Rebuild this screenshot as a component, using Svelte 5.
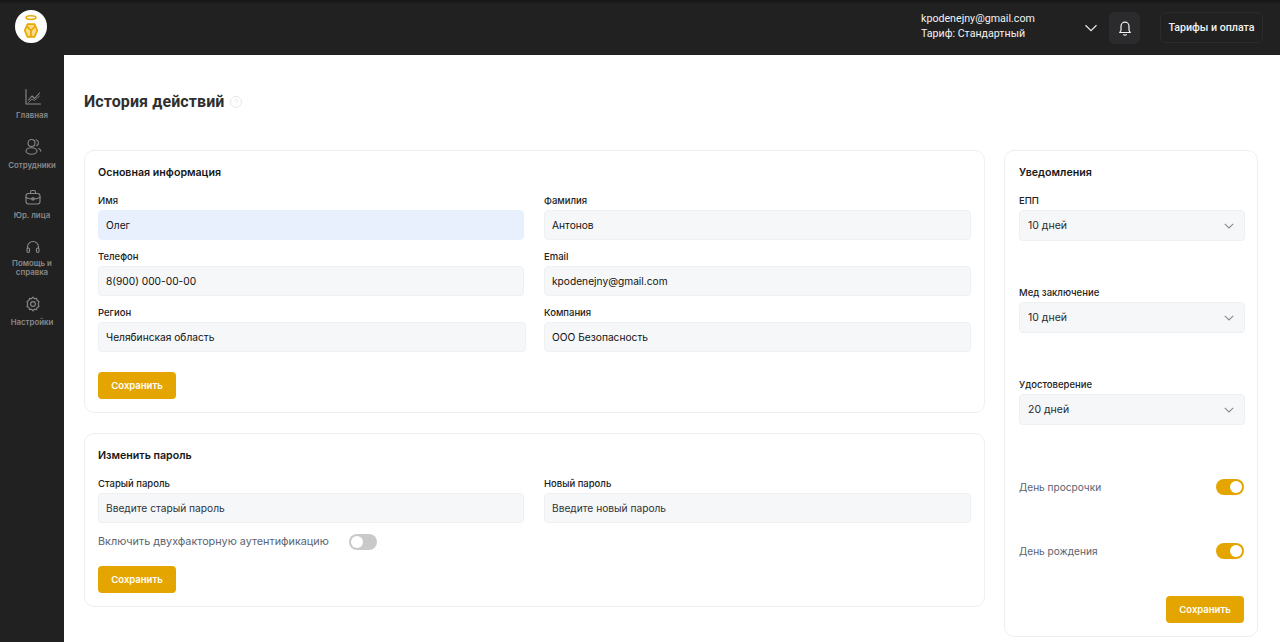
<script>
  const nav = [
    { id: 'chart', label: ['Главная'] },
    { id: 'users', label: ['Сотрудники'] },
    { id: 'case', label: ['Юр. лица'] },
    { id: 'head', label: ['Помощь и', 'справка'] },
    { id: 'gear', label: ['Настройки'] }
  ];
  const selects = [
    { label: 'ЕПП', value: '10 дней' },
    { label: 'Мед заключение', value: '10 дней' },
    { label: 'Удостоверение', value: '20 дней' }
  ];
</script>

<div class="page">
  <header class="top">
    <div class="logo">
      <svg width="14" height="23" viewBox="0 0 14 23" fill="none" stroke="#e8a800">
        <ellipse cx="7" cy="2.6" rx="5" ry="1.8" stroke-width="1.500"/>
        <path d="M3.500 9.200h7l2.800 6.300-2.800 6.300h-7L.7 15.500z" fill="#f8dc8a" stroke-width="1.700" stroke-linejoin="round"/>
        <path d="M7 15.500V21M7 15.500l-4-4M7 15.500l4-4" stroke-width="1.700"/>
      </svg>
    </div>
    <div class="account">
      <div>kpodenejny@gmail.com</div>
      <div>Тариф: Стандартный</div>
    </div>
    <svg class="caret" width="14" height="8" viewBox="0 0 14 8" fill="none" stroke="#e8e8e8" stroke-width="1.2"><path d="M1.5 1.2 7 6.6l5.5-5.4"/></svg>
    <div class="bell">
      <svg width="14" height="16" viewBox="0 0 14 16" fill="none" stroke="#f2f2f2" stroke-width="1.2" stroke-linejoin="round"><path d="M3 10.500V6.200a4 4 0 0 1 8 0v4.300l1.300 2H1.700z"/><path d="M5.500 14.200a1.600 1.600 0 0 0 3 0"/></svg>
    </div>
    <div class="plan">Тарифы и оплата</div>
  </header>

  <div class="body">
    <nav class="side">
      {#each nav as item}
        <div class="nav-item">
          <svg class="nav-icon" width="18" height="18" viewBox="0 0 18 18" fill="none" stroke="#8b8b8b" stroke-width="1.100" stroke-linecap="round" stroke-linejoin="round">
            {#if item.id === 'chart'}
              <path d="M2 1.500V16h14.500"/><path d="M4.500 12 8 8l2.500 2.500L15.500 5"/><path d="M4.500 14.500 8 11l2.500 1.500 5-4.500" stroke-width=".8"/>
            {:else if item.id === 'users'}
              <circle cx="7.500" cy="5" r="3.500"/><ellipse cx="7.500" cy="13" rx="5.500" ry="3.300"/><path d="M12 1.800a3.200 3.200 0 0 1 .6 6M14.800 10.500c1.300.7 2 1.600 2 2.800"/>
            {:else if item.id === 'case'}
              <rect x="2" y="5.500" width="14" height="10.500" rx="2.500"/><path d="M6.500 5.500V4A1.500 1.500 0 0 1 8 2.500h2A1.500 1.500 0 0 1 11.500 4v1.500M2 9.500c4.500 2 9.500 2 14 0"/><rect x="8" y="9.800" width="2" height="2.200" rx=".5"/>
            {:else if item.id === 'head'}
              <path d="M3.500 10.500V9a5.500 5.500 0 0 1 11 0v1.500"/><rect x="3" y="10" width="2.500" height="4.500" rx="1.200"/><rect x="12.500" y="10" width="2.500" height="4.500" rx="1.200"/>
            {:else}
              <path d="M9 2.200l1.400 1.500 2.100-.3.600 2 1.900 1L14.300 9l.7 2.600-1.900 1-.6 2-2.100-.4L9 15.800l-1.400-1.600-2.100.4-.6-2-1.900-1L3.700 9 3 6.400l1.900-1 .6-2 2.100.3z"/><circle cx="9" cy="9" r="2.400"/>
            {/if}
          </svg>
          <div class="nav-label">
            {#each item.label as line}<div>{line}</div>{/each}
          </div>
        </div>
      {/each}
    </nav>

    <main class="main">
      <div class="title-row">
        <h1>История действий</h1>
        <svg width="12" height="12" viewBox="0 0 12 12" fill="none" stroke="#e6e6e6"><circle cx="6" cy="6" r="5.500"/><path d="M4.500 4.800a1.500 1.500 0 1 1 2.300 1.300c-.5.300-.8.600-.8 1.100M6 8.500v.6"/></svg>
      </div>

      <div class="columns">
        <div class="left">
          <section class="card">
            <h2>Основная информация</h2>
            <div class="grid">
              <label class="field"><span>Имя</span><div class="input autofill">Олег</div></label>
              <label class="field"><span>Фамилия</span><div class="input">Антонов</div></label>
              <label class="field"><span>Телефон</span><div class="input">8(900) 000-00-00</div></label>
              <label class="field"><span>Email</span><div class="input">kpodenejny@gmail.com</div></label>
              <label class="field"><span>Регион</span><div class="input wide">Челябинская область</div></label>
              <label class="field"><span>Компания</span><div class="input">ООО Безопасность</div></label>
            </div>
            <button class="save first">Сохранить</button>
          </section>

          <section class="card second">
            <h2>Изменить пароль</h2>
            <div class="grid">
              <label class="field"><span>Старый пароль</span><div class="input muted">Введите старый пароль</div></label>
              <label class="field"><span>Новый пароль</span><div class="input muted">Введите новый пароль</div></label>
            </div>
            <div class="twofa">
              <span class="switch-label">Включить двухфакторную аутентификацию</span>
              <span class="switch off"></span>
            </div>
            <button class="save">Сохранить</button>
          </section>
        </div>

        <aside class="card notify">
          <h2>Уведомления</h2>
          {#each selects as s}
            <div class="field sel">
              <span>{s.label}</span>
              <div class="select">
                {s.value}
                <svg width="10" height="6" viewBox="0 0 10 6" fill="none" stroke="#858a92" stroke-width="1.100"><path d="M.8.800 5 5l4.200-4.200"/></svg>
              </div>
            </div>
          {/each}
          <div class="toggle-row r1"><span class="switch-label small">День просрочки</span><span class="switch on"></span></div>
          <div class="toggle-row r2"><span class="switch-label small">День рождения</span><span class="switch on"></span></div>
          <div class="end"><button class="save">Сохранить</button></div>
        </aside>
      </div>
    </main>
  </div>
</div>

<style>
  :global(body) { margin: 0; background: #212121; }
  * { box-sizing: border-box; }
  .page { width: 1280px; height: 642px; overflow: hidden; display: flex; flex-direction: column; font-family: Inter, "Noto Sans", sans-serif; background: #212121; }
  .top { height: 55px; flex: none; display: flex; align-items: center; padding: 0 17px 0 15px; background: linear-gradient(#151515, #212121 4px); }
  .logo { width: 32px; height: 33px; border-radius: 50%; background: #fff; display: flex; align-items: center; justify-content: center; margin-top: -2px; }
  .account { margin-left: auto; margin-top: -3px; font: 400 10.67px/15px Roboto, sans-serif; color: #f1f1f1; width: 164px; }
  .caret { margin-left: -1px; }
  .bell { width: 31px; height: 32px; margin-left: 11px; border-radius: 6px; background: #2b2b2d; display: flex; align-items: center; justify-content: center; }
  .plan { margin-left: 20px; height: 31px; width: 103px; border: 1px solid #2c2c2c; border-radius: 6px; display: flex; align-items: center; justify-content: center; font: 500 10.67px Roboto, sans-serif; color: #f1f1f1; }
  .body { flex: 1; display: flex; min-height: 0; }
  .side { width: 64px; flex: none; padding-top: 33px; display: flex; flex-direction: column; gap: 14px; }
  .nav-item { display: flex; flex-direction: column; align-items: center; gap: 5px; height: 36px; }
  .nav-item:nth-child(4) { height: 43px; gap: 3px; }
  .nav-icon { margin-left: 1px; }
  .nav-label { font: 600 7.85px/9px Inter, sans-serif; color: #8a8a8a; text-align: center; }
  .main { flex: 1; background: #fff; padding: 37px 22px 0 20px; min-width: 0; }
  .title-row { display: flex; align-items: center; gap: 5px; height: 20px; }
  h1 { margin: 0; font: 700 16px/20px Roboto, sans-serif; color: #2f2f2f; letter-spacing: .1px; }
  .columns { display: flex; gap: 19px; margin-top: 38px; align-items: flex-start; }
  .left { width: 901px; display: flex; flex-direction: column; gap: 20px; }
  .card { border: 1px solid #efeff1; border-radius: 10px; background: #fff; padding: 15px 13px 13px; }
  h2 { margin: 0; font: 600 10.65px/14px Inter, sans-serif; color: #171717; }
  .grid { display: grid; grid-template-columns: 426px 427px; column-gap: 20px; row-gap: 11px; margin-top: 15px; }
  .field { display: flex; flex-direction: column; gap: 3px; }
  .field span { font: 500 9.500px/12px Inter, sans-serif; color: #222; height: 12px; }
  .input { height: 30px; width: 100%; border: 1px solid #eef0f2; border-radius: 4px; background: #f6f7f9; padding: 0 7px; display: flex; align-items: center; font: 400 10.200px Inter, sans-serif; color: #111; }
  .autofill { background: #e8f0fe; border-color: #e8f0fe; }
  .wide { width: 428px; }
  .muted { color: #2e3238; }
  .save { display: block; width: 78px; height: 27px; border: 0; border-radius: 4px; background: #e5a500; color: #fff; font: 600 9.500px Inter, sans-serif; padding: 0; }
  .first { margin-top: 20px; }
  .twofa { display: flex; align-items: center; gap: 20px; height: 16px; margin-top: 11px; margin-bottom: 16px; }
  .switch-label { font: 400 10.800px/14px Inter, sans-serif; color: #5b6370; }
  .small { font-size: 10.100px; }
  .switch { position: relative; display: block; width: 28px; height: 16px; border-radius: 8px; flex: none; }
  .switch::after { content: ""; position: absolute; top: 2px; width: 12px; height: 12px; border-radius: 50%; background: #fff; }
  .off { background: #c9c9c9; }
  .off::after { left: 2px; }
  .on { background: #e5a500; }
  .on::after { right: 2px; }
  .notify { width: 254px; height: 487px; padding: 15px 14px 0 14px; }
  .sel { margin-top: 15px; }
  .sel + .sel { margin-top: 46px; }
  .select { width: 226px; height: 31px; border: 1px solid #eef0f2; border-radius: 4px; background: #f6f7f9; padding: 0 10px 0 8px; display: flex; align-items: center; justify-content: space-between; font: 400 10.500px Inter, sans-serif; color: #2a2a2a; }
  .toggle-row { display: flex; align-items: center; justify-content: space-between; width: 225px; height: 16px; }
  .r1 { margin-top: 54px; }
  .r2 { margin-top: 48px; }
  .end { width: 225px; display: flex; justify-content: flex-end; margin-top: 37px; }
</style>
